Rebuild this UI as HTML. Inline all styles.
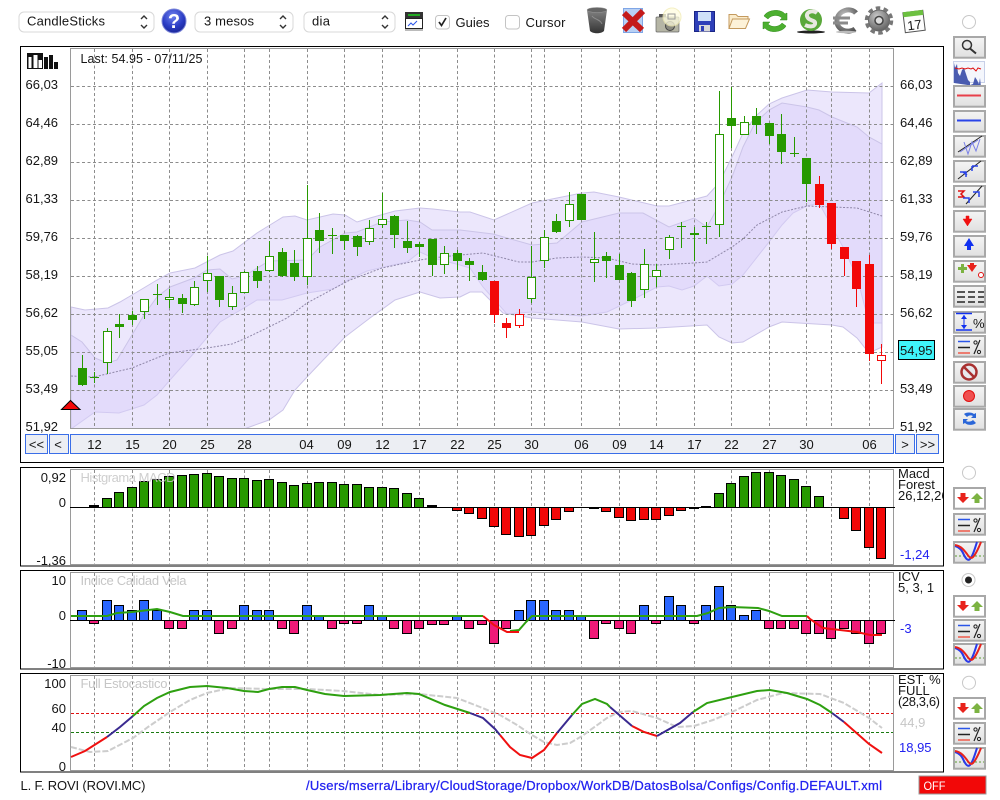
<!DOCTYPE html>
<html><head><meta charset="utf-8"><title>CandleSticks</title>
<style>
html,body{margin:0;padding:0;background:#fff;width:1000px;height:800px;overflow:hidden}
svg{display:block}
text{font-family:"Liberation Sans",sans-serif;font-size:13px;fill:#151515}
.r{text-anchor:end}.c{text-anchor:middle}
.b{fill:#2222f0}.t{fill:#c6c6c6}
</style></head><body>
<svg width="1000" height="800" viewBox="0 0 1000 800" xmlns="http://www.w3.org/2000/svg">
<defs>
<linearGradient id="bt" x1="0" y1="0" x2="0" y2="1"><stop offset="0" stop-color="#f5f5f5"/><stop offset="1" stop-color="#e0e0e0"/></linearGradient>
<radialGradient id="hb" cx=".45" cy=".3" r=".75"><stop offset="0" stop-color="#6f82ee"/><stop offset=".6" stop-color="#2a3cc4"/><stop offset="1" stop-color="#182490"/></radialGradient>
<radialGradient id="gy" cx=".4" cy=".3" r=".8"><stop offset="0" stop-color="#c8c8c8"/><stop offset="1" stop-color="#555"/></radialGradient>
<linearGradient id="gg" x1="0" y1="0" x2="0" y2="1"><stop offset="0" stop-color="#8a8a8a"/><stop offset="1" stop-color="#333"/></linearGradient>
<g id="btn"><rect x="954" y="0" width="31" height="20.7" fill="url(#bt)" stroke="#a8a8a8" stroke-width="2"/></g>
<g id="arr"><rect x="954" y="0" width="31" height="20.7" fill="#fff" stroke="#a8a8a8" stroke-width="2"/>
<path d="M960.500 5h5v4h3.500l-6 6-6-6h3.500z" fill="#e8231c"/><path d="M977 5l6 6h-3.500v4h-5v-4H971z" fill="#7cb342"/></g>
<g id="pct"><use href="#btn"/><path d="M958 5.500h12" stroke="#2a55e8" stroke-width="1.500"/><path d="M958 11.500h12" stroke="#222" stroke-width="1.500"/><path d="M958 17h12" stroke="#ee5a4a" stroke-width="1.500"/><path d="M980 4l-6 14" stroke="#222" stroke-width="1.200"/><circle cx="975.500" cy="6.500" r="1.600" fill="none" stroke="#222"/><circle cx="979" cy="16" r="1.600" fill="none" stroke="#222"/></g>
<g id="crv"><use href="#btn"/><path d="M955 14h29" stroke="#5a9a30" stroke-dasharray="2 2" fill="none"/><path d="M955 4c4 1 7 4 9 9 2 4 4 6 6 4 3-3 5-11 7-17" stroke="#2a3ae8" stroke-width="2" fill="none"/><path d="M955 3c6 1 9 5 12 9 2 3 4 5 6 3 3-3 6-10 8-15" stroke="#e8231c" stroke-width="2" fill="none"/></g>
</defs>

<!-- top toolbar -->
<g>
<rect x="19" y="12" width="135" height="20" rx="5" fill="#fff" stroke="#d8d8d8"/>
<text x="27" y="25.500" textLength="78">CandleSticks</text>
<path d="M141 19l3-3 3 3M141 25l3 3 3-3" fill="none" stroke="#333" stroke-width="1.400"/>
<circle cx="174" cy="21" r="12" fill="url(#hb)" stroke="#7a84d8"/>
<text x="174" y="28" class="c" style="font-size:20px;font-weight:bold;fill:#fff">?</text>
<rect x="195" y="12" width="98" height="20" rx="5" fill="#fff" stroke="#d8d8d8"/>
<text x="204" y="25.500" textLength="50">3 mesos</text>
<path d="M280 19l3-3 3 3M280 25l3 3 3-3" fill="none" stroke="#333" stroke-width="1.400"/>
<rect x="304" y="12" width="91" height="20" rx="5" fill="#fff" stroke="#d8d8d8"/>
<text x="312" y="25.500" textLength="18">dia</text>
<path d="M382 19l3-3 3 3M382 25l3 3 3-3" fill="none" stroke="#333" stroke-width="1.400"/>
<rect x="405" y="12" width="18" height="6" fill="#333"/><rect x="408" y="14" width="12" height="2" fill="#2a2"/>
<rect x="405.500" y="18.500" width="17" height="10" fill="#fff" stroke="#222"/>
<path d="M408 26l3-3 2 2 4-4" stroke="#2a55e8" fill="none"/><rect x="405" y="29" width="18" height="2" fill="#bbb"/>
<rect x="435.500" y="15.500" width="14" height="13.500" rx="3" fill="#fff" stroke="#c4c4c4"/>
<path d="M439 22l2.500 3.500 4.500-7.500" fill="none" stroke="#222" stroke-width="1.700"/>
<text x="455.500" y="27" textLength="34">Guies</text>
<rect x="505.500" y="15.500" width="14" height="13.500" rx="3" fill="#fff" stroke="#c4c4c4"/>
<text x="525.500" y="27" textLength="40">Cursor</text>
<!-- trash -->
<path d="M587 10c4-3 16-3 20 0l-3 21c-3 3-11 3-14 0z" fill="url(#gg)"/><ellipse cx="597" cy="10" rx="10" ry="2.500" fill="#666" stroke="#999" stroke-width=".5"/><path d="M592 16c3 4 8 3 10 8" stroke="#aaa" fill="none" opacity=".6"/>
<!-- X -->
<rect x="623.500" y="8.500" width="19" height="24" fill="#b8d0f4" stroke="#7fa6e6"/>
<path d="M624 13L642 30M643 11L624 30" fill="none" stroke="#c41a1a" stroke-width="6"/>
<!-- camera -->
<rect x="656" y="17" width="23" height="15" rx="1" fill="#b5b5a5" stroke="#666" stroke-width=".7"/><rect x="659" y="14" width="7" height="3" fill="#555"/><circle cx="670" cy="26" r="4.500" fill="#8a8a80" stroke="#444"/>
<circle cx="672" cy="17" r="9" fill="#fffde0" opacity=".75" stroke="#f0eab0"/><rect x="668" y="14" width="7" height="5" fill="none" stroke="#999"/>
<!-- floppy -->
<rect x="694.500" y="11.500" width="20" height="20" fill="#2e3fb8" stroke="#1a2585"/><rect x="698" y="12" width="13" height="9" fill="#cfe0f8"/><rect x="699" y="25" width="11" height="6.500" fill="#d8d8d8"/><rect x="701" y="26" width="3" height="5" fill="#2e3fb8"/>
<!-- folder -->
<path d="M729 28.500v-14h7l2 2h10v3" fill="#fbeccb" stroke="#c49a5e"/><path d="M729 28.500l3.500-9.500h17l-4 9.500z" fill="#fdf2d8" stroke="#c49a5e"/>
<!-- refresh -->
<path d="M764 16c3-6 16-8 21-2l2-1v7h-7l2-2c-4-4-11-3-14 1z" fill="#4caf30" stroke="#2c8a15" stroke-width=".5"/><path d="M786 26c-3 6-16 8-21 2l-2 1v-7h7l-2 2c4 4 11 3 14-1z" fill="#4caf30" stroke="#2c8a15" stroke-width=".5"/>
<!-- S coin -->
<ellipse cx="811" cy="32" rx="14" ry="1.500" fill="#222"/><circle cx="811" cy="20" r="11" fill="#5aa83a"/><path d="M817 13c-5-4-13 0-9 5 2 3 8 2 7 6-1 3-6 3-10 1" fill="none" stroke="#e8e8e0" stroke-width="4"/>
<!-- euro -->
<path d="M856 13c-5-6-18-3-19 7-1 10 11 14 18 9" fill="none" stroke="url(#gy)" stroke-width="5"/><path d="M833 18h17M833 23h15" stroke="#8a8a8a" stroke-width="3"/><ellipse cx="846" cy="32" rx="10" ry="1.200" fill="#bbb"/>
<!-- gear -->
<circle cx="879" cy="20.500" r="10.500" fill="url(#gy)" stroke="#666"/><circle cx="879" cy="20.500" r="12.500" fill="none" stroke="#777" stroke-width="3.500" stroke-dasharray="4.500 3.400"/><circle cx="879" cy="20.500" r="4" fill="#ddd" stroke="#444" stroke-width="1.500"/>
<!-- calendar -->
<g transform="rotate(-7 914 21)"><rect x="904" y="11.500" width="20" height="20" fill="#fdfdfd" stroke="#555"/><rect x="904" y="11" width="20" height="5" fill="#6cc040"/><text x="914" y="29.500" class="c" style="font-size:13px">17</text></g>
<circle cx="969" cy="22" r="6.500" fill="#fff" stroke="#c8c8c8"/>
</g>

<!-- panel frames -->
<rect x="20.500" y="46.500" width="923" height="416" fill="#fff" stroke="#000"/>
<rect x="20.500" y="467.500" width="923" height="98.500" fill="#fff" stroke="#000"/>
<rect x="20.500" y="570.500" width="923" height="98.500" fill="#fff" stroke="#000"/>
<rect x="20.500" y="673.500" width="923" height="98.500" fill="#fff" stroke="#000"/>

<!-- bands -->
<clipPath id="mc"><rect x="71" y="49" width="822" height="379"/></clipPath>
<g clip-path="url(#mc)" stroke="#cbc4e8" stroke-width="1">
<path fill="#d9cffa" fill-opacity=".5" d="M71 307L85 310 108 308 120 302 132 295 157 280 170 273 195 268 220 255 233 251 257 233 283 217 295 216 307 220 320 217 333 214 345 215 357 222 370 218 395 211 420 208 433 209 460 212 470 212 494 220 532 203 557 198 582 193 594 192 619 197 657 206 669 206 707 196 719 183 732 157 743 133 757 115 769 104 782 98 807 90 832 92 869 93 882 83V323H869L857 277 843 247 832 227 819 203 807 206 793 213 782 225 769 242 743 275 732 284 719 286 707 276 694 286 682 290 669 286 657 287 632 300 607 312 582 316 532 312 507 314 483 287 470 268 460 265 433 258 420 252 407 262 393 265 367 271 350 279 333 289 307 293 282 300 257 300 244 308 220 322 194 353 170 380 157 395 144 405 119 413 95 412 71 429z"/>
<path fill="#d9cffa" fill-opacity=".5" d="M71 335L82 342 95 358 107 363 117 360 132 335 144 315 157 297 170 287 194 278 207 270 220 269 232 279 244 276 269 261 307 260 320 247 345 233 357 232 382 222 407 220 420 222 432 230 460 230 493 234 532 245 557 243 582 222 619 213 643 213 669 227 694 218 707 227 719 205 732 177 743 147 755 123 769 110 782 103 807 107 819 110 832 117 857 127 869 137 882 144V347L869 353 857 338 843 327 832 325 782 322 769 327 743 342 732 343 719 337 707 325 657 328 619 329 582 322 532 318 503 313 482 292 470 292 460 297 440 298 420 292 395 300 370 318 345 337 307 377 295 390 283 410 269 420 244 429 71 429z"/>
</g>

<!-- grid main -->
<path fill="none" stroke="#8c8c8c" stroke-dasharray="3 2.500" d="M71 86.500H893M71 124.500H893M71 162.500H893M71 200.500H893M71 238.500H893M71 276.500H893M71 314.500H893M71 352.500H893M71 390.500H893"/>
<path fill="none" stroke="#8c8c8c" stroke-dasharray="3 2.500" d="M94.500 49V428M132.500 49V428M169.500 49V428M207.500 49V428M244.500 49V428M269.500 49V428M307.500 49V428M344.500 49V428M382.500 49V428M419.500 49V428M457.500 49V428M494.500 49V428M531.500 49V428M544.500 49V428M581.500 49V428M619.500 49V428M656.500 49V428M694.500 49V428M731.500 49V428M769.500 49V428M806.500 49V428M831.500 49V428M869.500 49V428"/>
<rect x="70.500" y="48.500" width="823" height="380" fill="none" stroke="#9a9a9a" stroke-width="1"/>

<!-- mid line -->
<path fill="none" stroke="#8f87a8" stroke-dasharray="2 1.500" d="M71 376L94 377 132 368 169 353 207 348 232 344 244 339 269 327 287 318 307 303 333 289 350 280 382 268 420 260 432 258 460 255 483 253 519 262 532 262 557 258 582 257 607 258 632 264 657 265 694 263 707 262 732 247 743 239 757 225 782 212 807 206 832 207 857 208 882 216"/>

<!-- candles -->
<path fill="none" stroke="#279900" d="M82.500 355V386M94.500 372V383M90 377.500h9M107.500 328V374M119.500 314V338M132.500 311V325M144.500 299V319M157.500 284V305M153 294.500h9M169.500 289V308M182.500 294V313M194.500 281V306M207.500 256V292M219.500 276V307M232.500 286V310M244.500 271V293M257.500 266V288M269.500 241V272M282.500 248V277M294.500 250V281M307.500 185V285M319.500 213V253M332.500 228V254M328 235.500h9M344.500 235V250M357.500 235V256M369.500 220V245M382.500 193V228M394.500 215V248M407.500 221V253M419.500 242V257M432.500 239V276M444.500 246V274M457.500 250V270M469.500 258V281M482.500 265V281M531.500 246V303M544.500 230V268M556.500 214V233M569.500 192V227M581.500 194V220M594.500 232V282M606.500 252V278M619.500 254V280M631.500 272V307M644.500 249V298M656.500 264V287M669.500 235V259M681.500 222V248M677 226.500h9M694.500 227V261M706.500 222V244M702 226.500h9M719.500 91V237M731.500 87V148M744.500 116V135M756.500 108V134M769.500 123V144M781.500 114V164M794.500 137V157M790 153.500h9M806.500 158V202"/>
<path fill="#279900" d="M78 368h9v17h-9zM115 324h9v3h-9zM128 315h9v5h-9zM178 298h9v6h-9zM215 276h9v24h-9zM253 271h9v10h-9zM278 252h9v24h-9zM290 263h9v14h-9zM315 230h9v11h-9zM340 235h9v6h-9zM353 236h9v11h-9zM390 216h9v19h-9zM403 241h9v7h-9zM415 244h9v3h-9zM428 239h9v26h-9zM453 253h9v8h-9zM465 261h9v4h-9zM478 272h9v8h-9zM552 221h9v11h-9zM577 194h9v26h-9zM602 256h9v5h-9zM615 265h9v15h-9zM627 273h9v28h-9zM690 233h9v2h-9zM727 118h9v8h-9zM752 116h9v9h-9zM765 123h9v13h-9zM777 134h9v18h-9zM802 158h9v26h-9z"/>
<path fill="#fff" stroke="#279900" d="M103.500 331.500h8v31h-8zM140.500 299.500h8v12h-8zM165.500 297.500h8v2h-8zM190.500 287.500h8v17h-8zM203.500 273.500h8v7h-8zM228.500 293.500h8v13h-8zM240.500 272.500h8v20h-8zM265.500 256.500h8v14h-8zM303.500 238.500h8v38h-8zM365.500 228.500h8v13h-8zM378.500 219.500h8v5h-8zM440.500 253.500h8v11h-8zM527.500 277.500h8v21h-8zM540.500 237.500h8v23h-8zM565.500 204.500h8v16h-8zM590.500 259.500h8v3h-8zM640.500 264.500h8v25h-8zM652.500 270.500h8v6h-8zM665.500 237.500h8v12h-8zM715.500 134.500h8v90h-8zM740.500 122.500h8v12h-8z"/>
<path fill="none" stroke="#f20808" d="M494.500 281V323M506.500 318V338M519.500 309V328M819.500 176V208M831.500 203V249M844.500 247V276M856.500 261V307M869.500 255V361M881.500 344V384"/>
<path fill="#f20808" d="M490 281h9v34h-9zM502 323h9v5h-9zM815 184h9v21h-9zM827 203h9v41h-9zM840 247h9v12h-9zM852 261h9v28h-9zM865 264h9v90h-9z"/>
<path fill="#fff" stroke="#f20808" d="M515.500 314.500h8v11h-8zM877.500 355.500h8v5h-8z"/>

<!-- main labels -->
<g>
<text x="25.500" y="89">66,03</text><text x="25.500" y="127">64,46</text><text x="25.500" y="165">62,89</text><text x="25.500" y="203">61,33</text><text x="25.500" y="241">59,76</text><text x="25.500" y="279">58,19</text><text x="25.500" y="317">56,62</text><text x="25.500" y="355">55,05</text><text x="25.500" y="393">53,49</text><text x="25.500" y="431">51,92</text>
<text x="900" y="89">66,03</text><text x="900" y="127">64,46</text><text x="900" y="165">62,89</text><text x="900" y="203">61,33</text><text x="900" y="241">59,76</text><text x="900" y="279">58,19</text><text x="900" y="317">56,62</text><text x="900" y="393">53,49</text><text x="900" y="431">51,92</text>
</g>
<rect x="898.500" y="340.500" width="36" height="19" fill="#3ff4fb" stroke="#000"/>
<text x="900" y="355">54,95</text>
<text x="80.500" y="63" textLength="122" style="font-size:12.500px">Last: 54.95 - 07/11/25</text>
<path d="M61.500 409.500L70.500 400.500 80 409.500z" fill="#f20808" stroke="#000"/>
<!-- logo -->
<rect x="27" y="53" width="16" height="16" fill="#111"/><path d="M28.500 57h3v11h-3zM33.500 55h4v13h-4zM38.500 60h3.500v8h-3.500z" fill="#fff"/><path d="M44 57h4v12h-4zM49 55h4v14h-4zM54 62h4v7h-4z" fill="#111"/>

<!-- nav -->
<rect x="70.500" y="434.500" width="823" height="19" fill="#eceef3" stroke="#3a6ee8"/>
<rect x="25.500" y="434.500" width="22" height="19" fill="#eceef3" stroke="#3a6ee8"/><text x="36.500" y="449" class="c">&lt;&lt;</text>
<rect x="49.500" y="434.500" width="19" height="19" fill="#eceef3" stroke="#3a6ee8"/><text x="58" y="449" class="c">&lt;</text>
<rect x="895.500" y="434.500" width="19" height="19" fill="#eceef3" stroke="#3a6ee8"/><text x="905" y="449" class="c">&gt;</text>
<rect x="916.500" y="434.500" width="22" height="19" fill="#eceef3" stroke="#3a6ee8"/><text x="927.500" y="449" class="c">&gt;&gt;</text>
<g text-anchor="middle">
<text x="94.500" y="449">12</text><text x="132.500" y="449">15</text><text x="169.500" y="449">20</text><text x="207.500" y="449">25</text><text x="244.500" y="449">28</text><text x="306.500" y="449">04</text><text x="344.500" y="449">09</text><text x="382.500" y="449">12</text><text x="419.500" y="449">17</text><text x="457.500" y="449">22</text><text x="494.500" y="449">25</text><text x="531.500" y="449">30</text><text x="581.500" y="449">06</text><text x="619.500" y="449">09</text><text x="656.500" y="449">14</text><text x="694.500" y="449">17</text><text x="731.500" y="449">22</text><text x="769.500" y="449">27</text><text x="806.500" y="449">30</text><text x="869.500" y="449">06</text>
</g>

<!-- MACD panel -->
<path fill="none" stroke="#8c8c8c" stroke-dasharray="3 2.500" d="M94.500 470V564M132.500 470V564M169.500 470V564M207.500 470V564M244.500 470V564M269.500 470V564M307.500 470V564M344.500 470V564M382.500 470V564M419.500 470V564M457.500 470V564M494.500 470V564M531.500 470V564M544.500 470V564M581.500 470V564M619.500 470V564M656.500 470V564M694.500 470V564M731.500 470V564M769.500 470V564M806.500 470V564M831.500 470V564M869.500 470V564"/>
<rect x="70.500" y="469.500" width="823" height="95" fill="none" stroke="#9a9a9a"/>
<path fill="#279900" stroke="#000" d="M102.500 498.500h9v9h-9zM114.500 492.500h9v15h-9zM127.500 487.500h9v20h-9zM139.500 481.500h9v26h-9zM152.500 479.500h9v28h-9zM164.500 476.500h9v31h-9zM177.500 475.500h9v32h-9zM189.500 474.500h9v33h-9zM202.500 473.500h9v34h-9zM214.500 476.500h9v31h-9zM227.500 478.500h9v29h-9zM239.500 478.500h9v29h-9zM252.500 480.500h9v27h-9zM264.500 479.500h9v28h-9zM277.500 482.500h9v25h-9zM289.500 485.500h9v22h-9zM302.500 483.500h9v24h-9zM314.500 482.500h9v25h-9zM327.500 482.500h9v25h-9zM339.500 484.500h9v23h-9zM352.500 484.500h9v23h-9zM364.500 487.500h9v20h-9zM377.500 487.500h9v20h-9zM389.500 488.500h9v19h-9zM402.500 493.500h9v14h-9zM414.500 498.500h9v9h-9zM714.500 493.500h9v14h-9zM726.500 483.500h9v24h-9zM739.500 476.500h9v31h-9zM751.500 472.500h9v35h-9zM764.500 472.500h9v35h-9zM776.500 475.500h9v32h-9zM789.500 479.500h9v28h-9zM801.500 486.500h9v21h-9zM814.500 496.500h9v11h-9z"/>
<path fill="#000" d="M89 505h10v3H89zM427 505h10v3h-10zM701 506h10v2h-10z"/>
<path fill="#f20808" stroke="#000" d="M452.500 507.500h9v3h-9zM464.500 507.500h9v6h-9zM477.500 507.500h9v11h-9zM489.500 507.500h9v19h-9zM501.500 507.500h9v27h-9zM514.500 507.500h9v29h-9zM526.500 507.500h9v28h-9zM539.500 507.500h9v18h-9zM551.500 507.500h9v12h-9zM564.500 507.500h9v4h-9zM589.500 507.500h9v1h-9zM601.500 507.500h9v4h-9zM614.500 507.500h9v10h-9zM626.500 507.500h9v13h-9zM639.500 507.500h9v12h-9zM651.500 507.500h9v12h-9zM664.500 507.500h9v8h-9zM676.500 507.500h9v3h-9zM689.500 507.500h9v1h-9zM839.500 507.500h9v11h-9zM851.500 507.500h9v23h-9zM864.500 507.500h9v40h-9zM876.500 507.500h9v51h-9z"/>
<path d="M70 507.500H895" stroke="#000"/>
<text x="66" y="482" class="r">0,92</text><text x="66" y="507" class="r">0</text><text x="66" y="565" class="r">-1,36</text>
<text x="80.500" y="482" class="t" textLength="95" opacity=".85">Histgrama MACD</text>
<text x="898" y="478">Macd</text><text x="898" y="489">Forest</text>
<svg x="0" y="0" width="943" height="800"><text x="898" y="500">26,12,26</text></svg>
<text x="900" y="559" class="b">-1,24</text>

<!-- ICV panel -->
<path fill="none" stroke="#8c8c8c" stroke-dasharray="3 2.500" d="M94.500 573V667M132.500 573V667M169.500 573V667M207.500 573V667M244.500 573V667M269.500 573V667M307.500 573V667M344.500 573V667M382.500 573V667M419.500 573V667M457.500 573V667M494.500 573V667M531.500 573V667M544.500 573V667M581.500 573V667M619.500 573V667M656.500 573V667M694.500 573V667M731.500 573V667M769.500 573V667M806.500 573V667M831.500 573V667M869.500 573V667"/>
<rect x="70.500" y="572.500" width="823" height="95" fill="none" stroke="#9a9a9a"/>
<path fill="#2a66ff" stroke="#000" d="M77.500 610.500h9v10h-9zM102.500 600.500h9v20h-9zM114.500 605.500h9v15h-9zM127.500 610.500h9v10h-9zM139.500 600.500h9v20h-9zM152.500 610.500h9v10h-9zM189.500 610.500h9v10h-9zM202.500 610.500h9v10h-9zM239.500 605.500h9v15h-9zM252.500 610.500h9v10h-9zM264.500 610.500h9v10h-9zM302.500 605.500h9v15h-9zM314.500 616.500h9v4h-9zM364.500 605.500h9v15h-9zM377.500 615.500h9v5h-9zM452.500 615.500h9v5h-9zM514.500 610.500h9v10h-9zM526.500 600.500h9v20h-9zM539.500 600.500h9v20h-9zM551.500 610.500h9v10h-9zM564.500 610.500h9v10h-9zM576.500 615.500h9v5h-9zM639.500 605.500h9v15h-9zM664.500 596.500h9v24h-9zM676.500 605.500h9v15h-9zM701.500 605.500h9v15h-9zM714.500 586.500h9v34h-9zM726.500 605.500h9v15h-9zM739.500 615.500h9v5h-9zM751.500 610.500h9v10h-9z"/>
<path fill="#f01a78" stroke="#000" d="M89.500 620.500h9v3h-9zM164.500 620.500h9v8h-9zM177.500 620.500h9v8h-9zM214.500 620.500h9v13h-9zM227.500 620.500h9v8h-9zM277.500 620.500h9v8h-9zM289.500 620.500h9v13h-9zM327.500 620.500h9v8h-9zM339.500 620.500h9v3h-9zM352.500 620.500h9v3h-9zM389.500 620.500h9v8h-9zM402.500 620.500h9v13h-9zM414.500 620.500h9v8h-9zM427.500 620.500h9v4h-9zM439.500 620.500h9v4h-9zM464.500 620.500h9v8h-9zM477.500 620.500h9v4h-9zM489.500 620.500h9v23h-9zM501.500 620.500h9v8h-9zM589.500 620.500h9v18h-9zM601.500 620.500h9v3h-9zM614.500 620.500h9v8h-9zM626.500 620.500h9v13h-9zM651.500 620.500h9v3h-9zM689.500 620.500h9v3h-9zM764.500 620.500h9v8h-9zM776.500 620.500h9v8h-9zM789.500 620.500h9v8h-9zM801.500 620.500h9v13h-9zM814.500 620.500h9v13h-9zM826.500 620.500h9v18h-9zM839.500 620.500h9v8h-9zM851.500 620.500h9v13h-9zM864.500 620.500h9v23h-9zM876.500 620.500h9v13h-9z"/>
<path d="M70 620.500H895" stroke="#000"/>
<path fill="none" stroke="#2ea010" stroke-width="2" d="M71 616H107L117 613 132 612 157 609 170 612 183 616H483M510 631L519 630 526 622 532 616H697L708 613 719 608 732 607 758 608 769 611 782 616H807"/>
<path fill="none" stroke="#f01010" stroke-width="2" d="M483 616L494 625 507 632 519 632M807 616L810 619 823 628 840 630 857 632 870 635 882 635"/>
<text x="66" y="585" class="r">10</text><text x="66" y="620" class="r">0</text><text x="66" y="668" class="r">-10</text>
<text x="80.500" y="585" class="t" textLength="106">Indice Calidad Vela</text>
<text x="898" y="581">ICV</text><text x="898" y="592">5, 3, 1</text>
<text x="900" y="633" class="b">-3</text>

<!-- Stoch panel -->
<path fill="none" stroke="#8c8c8c" stroke-dasharray="3 2.500" d="M94.500 676V770M132.500 676V770M169.500 676V770M207.500 676V770M244.500 676V770M269.500 676V770M307.500 676V770M344.500 676V770M382.500 676V770M419.500 676V770M457.500 676V770M494.500 676V770M531.500 676V770M544.500 676V770M581.500 676V770M619.500 676V770M656.500 676V770M694.500 676V770M731.500 676V770M769.500 676V770M806.500 676V770M831.500 676V770M869.500 676V770"/>
<path d="M71 713.500H893" stroke="#e01010" stroke-dasharray="3 2"/>
<path d="M71 732.500H893" stroke="#1a7a10" stroke-dasharray="3 2"/>
<rect x="70.500" y="675.500" width="823" height="95" fill="none" stroke="#9a9a9a"/>
<path fill="none" stroke="#cdcdcd" stroke-width="2" stroke-dasharray="6 2" d="M71 747L90 752 108 751 133 738 148 727 170 712 190 700 207 693 230 688 267 689 307 689 343 691 380 695 419 694 457 698 480 707 500 715 517 725 532 735 544 742 557 745 570 743 582 736 607 718 619 712 632 711 657 718 677 727 694 726 713 720 732 712 757 700 783 693 820 694 844 703 869 718 882 728"/>
<g fill="none" stroke-width="2">
<path stroke="#f01010" d="M71 757L85 751 107 737M500 735L510 747 520 755 532 758 544 750 557 733M632 726L644 732 657 736M844 722L869 744 882 753"/>
<path stroke="#3a2a90" d="M107 737L120 727 133 716M470 713L483 718 495 729 500 735M557 733L572 715M610 707L632 726M657 736L680 723 693 712M832 713L844 722"/>
<path stroke="#2ea010" d="M133 716L144 706 157 698 170 692 190 687 207 686 227 688 244 691 258 692 269 689 282 687 295 687 307 690 325 694 344 696 380 695 407 693 419 694 445 705 470 713M572 715L582 704 595 699 607 704 610 707M693 712L707 703 732 697 757 691 770 690 787 693 807 699 820 705 832 713"/>
</g>
<text x="66" y="688" class="r">100</text><text x="66" y="713" class="r">60</text><text x="66" y="732" class="r">40</text><text x="66" y="771" class="r">0</text>
<text x="80.500" y="688" class="t" textLength="87">Full Estocastico</text>
<text x="898" y="684">EST. %</text><text x="898" y="695">FULL</text><text x="898" y="706" textLength="42">(28,3,6)</text>
<text x="900" y="727" class="t">44,9</text><text x="899" y="752" class="b">18,95</text>

<!-- status -->
<text x="20.500" y="790" textLength="125">L. F. ROVI (ROVI.MC)</text>
<text x="306" y="790" class="b" textLength="576" stroke="#2222f0" stroke-width=".25">/Users/mserra/Library/CloudStorage/Dropbox/WorkDB/DatosBolsa/Configs/Config.DEFAULT.xml</text>
<rect x="919" y="776" width="67" height="18" fill="#f20808" stroke="#999" stroke-width="1"/>
<text x="923.500" y="790" style="fill:#fff;font-size:12px" textLength="22" lengthAdjust="spacingAndGlyphs">OFF</text>

<!-- right buttons -->
<use href="#btn" y="37"/><g><circle cx="967" cy="45" r="4.500" fill="#e8e8e8" stroke="#333" stroke-width="1.500"/><path d="M970 48.500l6 5" stroke="#333" stroke-width="2"/></g>
<rect x="953.500" y="61.500" width="31" height="21" fill="#f4f6fc" stroke="#c8d0e8"/><path d="M954 83V63l1 5 2-4 1 9 2 3 2-6 2-2 2 6 2 6 2 2v3l3-1 2-7 2 3 2 4 1-6 1 9z" fill="#4a5cb0"/><path d="M955 68l4 1 3-1 3 1 3-1 3 1 2-1 3 3 2-3 3 1" stroke="#e01010" fill="none"/>
<use href="#btn" y="86"/><path d="M957 95.500h24" stroke="#e8404a" stroke-width="2"/>
<use href="#btn" y="111"/><path d="M957 120.500h24" stroke="#2a44e8" stroke-width="2"/>
<use href="#btn" y="136"/><path d="M958 152L982 136" stroke="#222"/><path d="M964 142l4 12 4-12 4 9 4-12M960 152l18-12" stroke="#7a80e8" fill="none"/>
<use href="#btn" y="161"/><path d="M958 179L981 161" stroke="#222"/><path d="M960 172h6v5M972 166h6M972 166v5M963 172l4 3" stroke="#2a44e8" stroke-width="1.500" fill="none"/>
<use href="#btn" y="186"/><path d="M966 204L982 186" stroke="#222"/><path d="M958 191h6l-3 3 3 3h-6" fill="none" stroke="#e01010" stroke-width="1.500"/><path d="M963 198h6v5M973 192h6v5" stroke="#2a44e8" stroke-width="1.500" fill="none"/>
<use href="#btn" y="211"/><path d="M966 216h3v3h3l-4.500 7-4.500-7h3z" fill="#f01010" stroke="#f01010" stroke-width=".5"/>
<use href="#btn" y="236"/><path d="M969 238l5 8h-3v4h-4v-4h-3z" fill="#1030f0"/>
<use href="#btn" y="261"/><path d="M958 267h3v-3h3v3h3v3h-3v3h-3v-3h-3z" fill="#7cb342"/><path d="M967 265h3v-2h4v2h3l-5 7z" fill="#e8231c"/><circle cx="981" cy="275" r="2.500" fill="#fff" stroke="#e01010"/>
<use href="#btn" y="286"/><path d="M957 292h8M968 292h7M978 292h6M957 297h8M968 297h7M978 297h6M957 302h8M968 302h7M978 302h6" stroke="#555" stroke-width="2"/>
<use href="#btn" y="312"/><path d="M956 313.500h16M956 330h16" stroke="#1030f0" stroke-width="1.500"/><path d="M964 315v14" stroke="#1030f0"/><path d="M964 315l-3 4h6zM964 329l-3-4h6z" fill="#1030f0"/><text x="973" y="328" style="font-size:13px">%</text>
<use href="#pct" y="336"/>
<use href="#btn" y="362"/><circle cx="969" cy="372" r="7.500" fill="#e8e8ec" stroke="#a83030" stroke-width="2.500"/><path d="M964 367l10 10" stroke="#a83030" stroke-width="2.500"/>
<use href="#btn" y="386"/><circle cx="969" cy="396" r="5.500" fill="#f05050" stroke="#e01010"/>
<use href="#btn" y="409"/><path d="M964 414c2-2 8-2 10 0l2-1v5h-5l2-2c-2-1-4-1-6 1zM976 423c-2 2-8 3-11 0l-2 1v-5h5l-2 2c2 1 5 1 7-1z" fill="#2a66d8"/>

<circle cx="969" cy="472.700" r="6.500" fill="#fff" stroke="#c8c8c8"/>
<use href="#arr" y="488"/><use href="#pct" y="514"/><use href="#crv" y="542"/>
<circle cx="968.500" cy="580" r="6.500" fill="#fff" stroke="#c8c8c8"/><circle cx="968.500" cy="580" r="3.500" fill="#222"/>
<use href="#arr" y="596"/><use href="#pct" y="620"/><use href="#crv" y="644"/>
<circle cx="969" cy="682.700" r="6.500" fill="#fff" stroke="#c8c8c8"/>
<use href="#arr" y="698"/><use href="#pct" y="723"/><use href="#crv" y="748"/>
</svg>
</body></html>
